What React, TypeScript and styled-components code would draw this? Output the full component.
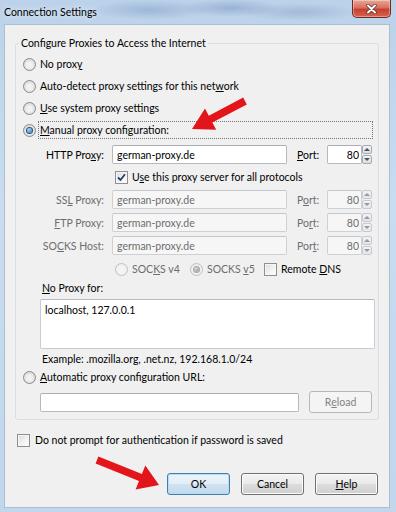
import React from 'react';
import styled, { createGlobalStyle, css } from 'styled-components';

const GlobalStyle = createGlobalStyle`
  html, body { margin: 0; padding: 0; }
  body {
    width: 396px; height: 512px; overflow: hidden;
    font-family: Lato, "Noto Sans", sans-serif;
    font-size: 10.5px; color: #000;
  }
  * { box-sizing: border-box; }
`;

const Window = styled.div`
  position: relative;
  width: 396px;
  height: 512px;
  display: flex;
  flex-direction: column;
  background:
    radial-gradient(ellipse 60px 10px at 150px 10px, rgba(120,150,190,0.45), transparent),
    radial-gradient(ellipse 50px 9px at 230px 8px, rgba(110,140,185,0.45), transparent),
    radial-gradient(ellipse 60px 9px at 300px 12px, rgba(120,150,190,0.4), transparent),
    linear-gradient(180deg, #bcd2ea 0%, #c9dcf0 40%, #c2d6ec 100%);
`;

const TitleBar = styled.div`
  height: 24px;
  display: flex;
  align-items: flex-start;
  flex-shrink: 0;
`;

const Title = styled.div`
  padding-left: 4px;
  line-height: 24px;
  color: #000;
  text-shadow: 0 0 6px rgba(255,255,255,0.9);
`;

const CloseButton = styled.div`
  margin-left: auto;
  margin-right: 5px;
  width: 39px;
  height: 18px;
  border: 1px solid #6d2b24;
  border-top: none;
  border-radius: 0 0 5px 5px;
  background: linear-gradient(180deg, #e9a796 0%, #d9705f 45%, #c8402f 55%, #d4644f 100%);
  display: flex;
  align-items: center;
  justify-content: center;
  box-shadow: inset 0 0 0 1px rgba(255,255,255,0.35);
`;

const Client = styled.div`
  flex: 1;
  margin: 0 6px 4px 4px;
  border: 1px solid #a9bfd6;
  background: #f0f0f0;
  display: flex;
  flex-direction: column;
`;

const Group = styled.fieldset`
  margin: 11px 10px 0 10px;
  padding: 3px 0 6px 0;
  border: 1px solid #d5dfe5;
  border-radius: 3px;
  min-width: 0;
  display: flex;
  flex-direction: column;
`;

const Legend = styled.legend`
  margin-left: 3px;
  padding: 0 2px;
  line-height: 14px;
`;

const RadioRow = styled.div`
  height: 22px;
  display: flex;
  align-items: center;
  padding-left: 7px;
`;

const OptionLabel = styled.span<{ $focused?: boolean; $disabled?: boolean }>`
  margin-left: 2px;
  padding: 0 1px;
  line-height: 16px;
  border: 1px dotted transparent;
  color: ${p => (p.$disabled ? '#6d6d6d' : '#000')};
  white-space: nowrap;
  ${p =>
    p.$focused &&
    css`
      flex: 1;
      margin-right: 5px;
      border-color: #777;
    `}
`;

const U = styled.span`
  text-decoration: underline;
  text-underline-offset: 1px;
`;

const Radio = styled.span<{ $checked?: boolean; $disabled?: boolean }>`
  width: 13px;
  height: 13px;
  flex-shrink: 0;
  border-radius: 50%;
  border: 1px solid ${p => (p.$disabled ? '#c0c0c0' : '#8b8b8b')};
  background: ${p =>
    p.$disabled
      ? 'radial-gradient(circle at 50% 55%, #f4f4f4 40%, #e6e6e6 100%)'
      : 'radial-gradient(circle at 50% 55%, #f2f2f2 30%, #cfcfcf 90%)'};
  display: flex;
  align-items: center;
  justify-content: center;
  &::after {
    content: '';
    width: 5px;
    height: 5px;
    border-radius: 50%;
    display: ${p => (p.$checked ? 'block' : 'none')};
    background: ${p =>
      p.$disabled
        ? 'radial-gradient(circle at 40% 35%, #d8d8d8, #8e8e8e)'
        : 'radial-gradient(circle at 40% 35%, #a8e0ff, #1b5ea6)'};
    box-shadow: 0 0 0 1px ${p => (p.$disabled ? '#a8a8a8' : '#2b4f7c')};
  }
`;

const CheckBoxBox = styled.span`
  width: 13px;
  height: 13px;
  flex-shrink: 0;
  border: 1px solid #8e8f8f;
  background: linear-gradient(135deg, #dcdcdc 0%, #f4f4f4 60%, #ffffff 100%);
  box-shadow: inset 0 0 0 1px #f6f6f6;
  display: flex;
  align-items: center;
  justify-content: center;
`;

const CheckBox: React.FC<{ checked?: boolean }> = ({ checked }) => (
  <CheckBoxBox>
    {checked && (
      <svg width="9" height="9" viewBox="0 0 9 9">
        <path d="M1 4.5 L3.5 7 L8 1.2" fill="none" stroke="#1e3f73" strokeWidth="1.8" />
      </svg>
    )}
  </CheckBoxBox>
);

const ProxyGrid = styled.div`
  margin-top: 4px;
  display: grid;
  grid-template-columns: 96px 185px 30px 45px;
  row-gap: 4px;
  align-items: center;
`;

const FieldLabel = styled.span<{ $disabled?: boolean }>`
  text-align: right;
  padding-right: 8px;
  color: ${p => (p.$disabled ? '#6d6d6d' : '#000')};
  white-space: nowrap;
`;

const PortLabel = styled.span<{ $disabled?: boolean }>`
  color: ${p => (p.$disabled ? '#6d6d6d' : '#000')};
`;

const boxStyle = css<{ $disabled?: boolean }>`
  height: 19px;
  margin: 0;
  font: inherit;
  border: 1px solid ${p => (p.$disabled ? '#cdd1d5' : '#b5b9bf')};
  border-top-color: ${p => (p.$disabled ? '#c4c8cc' : '#abadb3')};
  border-radius: 2px;
  background: ${p => (p.$disabled ? '#f6f6f6' : '#fff')};
  color: ${p => (p.$disabled ? '#6d6d6d' : '#000')};
  outline: none;
`;

const TextBox = styled.input<{ $w: number; $disabled?: boolean; $right?: boolean }>`
  ${boxStyle}
  width: ${p => p.$w}px;
  padding: 0 ${p => (p.$right ? '2px' : '4px')};
  text-align: ${p => (p.$right ? 'right' : 'left')};
`;

const EmptyField = styled.div<{ $w: number; $disabled?: boolean }>`
  ${boxStyle}
  width: ${p => p.$w}px;
`;

const PortBox = styled.div`
  display: flex;
  align-items: center;
`;

const Spinner = styled.div<{ $disabled?: boolean }>`
  width: 10px;
  height: 19px;
  display: flex;
  flex-direction: column;
  gap: 1px;
  opacity: ${p => (p.$disabled ? 0.55 : 1)};
`;

const SpinHalf = styled.div<{ $down?: boolean }>`
  flex: 1;
  border: 1px solid #a7abb0;
  border-radius: 2px;
  background: linear-gradient(180deg, #f4f4f4, #dedede);
  display: flex;
  align-items: center;
  justify-content: center;
  &::after {
    content: '';
    border-left: 3px solid transparent;
    border-right: 3px solid transparent;
    ${p =>
      p.$down
        ? css`border-top: 3px solid #44546a;`
        : css`border-bottom: 3px solid #44546a;`}
  }
`;

const SpanRow = styled.div<{ $h: number }>`
  grid-column: 2 / 5;
  height: ${p => p.$h}px;
  display: flex;
  align-items: center;
  padding-left: 3px;
`;

const SocksOption = styled.div<{ $w?: number }>`
  display: flex;
  align-items: center;
  gap: 4px;
  width: ${p => (p.$w ? `${p.$w}px` : 'auto')};
  white-space: nowrap;
`;

const Gray = styled.span`
  color: #6d6d6d;
`;

const SectionText = styled.div<{ $mt: number }>`
  margin: ${p => p.$mt}px 0 0 26px;
  line-height: 14px;
`;

const NoProxyArea = styled.div`
  margin: 4px 0 0 24px;
  width: 335px;
  height: 50px;
  padding: 3px 4px;
  background: #fff;
  border: 1px solid #c9ccd1;
  border-top-color: #b5b8bd;
  border-radius: 2px;
  line-height: 14px;
`;

const UrlRow = styled.div`
  margin: 3px 0 0 24px;
  display: flex;
  align-items: center;
  gap: 10px;
`;

const Button = styled.div<{ $default?: boolean; $disabled?: boolean }>`
  width: 63px;
  height: 22px;
  border-radius: 3px;
  display: flex;
  align-items: center;
  justify-content: center;
  border: 1px solid ${p => (p.$default ? '#3c7fb1' : p.$disabled ? '#b5b8bb' : '#707070')};
  color: ${p => (p.$disabled ? '#838383' : '#000')};
  background: ${p =>
    p.$disabled
      ? '#f4f4f4'
      : p.$default
      ? 'linear-gradient(180deg, #ecf4fa 0%, #e3eef8 48%, #cfe2f2 52%, #c3d9ec 100%)'
      : 'linear-gradient(180deg, #f2f2f2 0%, #ebebeb 48%, #dddddd 52%, #cfcfcf 100%)'};
  box-shadow: inset 0 0 0 1px ${p => (p.$default ? '#b9dcf3' : p.$disabled ? '#f4f4f4' : '#fcfcfc')};
`;

const AuthRow = styled.div`
  margin: 11px 0 0 12px;
  height: 18px;
  display: flex;
  align-items: center;
  gap: 5px;
`;

const ButtonRow = styled.div`
  margin-top: 24px;
  padding-right: 11px;
  display: flex;
  justify-content: flex-end;
  gap: 11px;
`;

const Overlay = styled.svg`
  position: absolute;
  left: 0;
  top: 0;
  pointer-events: none;
`;

function arrowPoints(tx: number, ty: number, px: number, py: number, w: number, L: number, H: number) {
  const dx = px - tx;
  const dy = py - ty;
  const len = Math.hypot(dx, dy);
  const ux = dx / len;
  const uy = dy / len;
  const nx = -uy;
  const ny = ux;
  const bx = px - ux * L;
  const by = py - uy * L;
  const pts: [number, number][] = [
    [tx + nx * w, ty + ny * w],
    [bx + nx * w, by + ny * w],
    [bx + nx * H, by + ny * H],
    [px, py],
    [bx - nx * H, by - ny * H],
    [bx - nx * w, by - ny * w],
    [tx - nx * w, ty - ny * w],
  ];
  return pts.map(p => p.map(v => v.toFixed(1)).join(',')).join(' ');
}

const ProxyRow: React.FC<{ label: React.ReactNode; port: React.ReactNode; disabled?: boolean }> = ({
  label,
  port,
  disabled,
}) => (
  <>
    <FieldLabel $disabled={disabled}>{label}</FieldLabel>
    <TextBox $w={175} $disabled={disabled} readOnly value="german-proxy.de" />
    <PortLabel $disabled={disabled}>{port}</PortLabel>
    <PortBox>
      <TextBox $w={35} $right $disabled={disabled} readOnly value="80" />
      <Spinner $disabled={disabled}>
        <SpinHalf />
        <SpinHalf $down />
      </Spinner>
    </PortBox>
  </>
);

export default function App() {
  return (
    <>
      <GlobalStyle />
      <Window>
        <TitleBar>
          <Title>Connection Settings</Title>
          <CloseButton>
            <svg width="11" height="10" viewBox="0 0 11 10">
              <path d="M2 1.5 L9 8.5 M9 1.5 L2 8.5" stroke="#4a2a28" strokeWidth="3.2" strokeLinecap="round" />
              <path d="M2 1.5 L9 8.5 M9 1.5 L2 8.5" stroke="#fff" strokeWidth="2" strokeLinecap="round" />
            </svg>
          </CloseButton>
        </TitleBar>
        <Client>
          <Group>
            <Legend>Configure Proxies to Access the Internet</Legend>
            <RadioRow>
              <Radio />
              <OptionLabel>
                No prox<U>y</U>
              </OptionLabel>
            </RadioRow>
            <RadioRow>
              <Radio />
              <OptionLabel>
                Auto-detect proxy settings for this net<U>w</U>ork
              </OptionLabel>
            </RadioRow>
            <RadioRow>
              <Radio />
              <OptionLabel>
                <U>U</U>se system proxy settings
              </OptionLabel>
            </RadioRow>
            <RadioRow>
              <Radio $checked />
              <OptionLabel $focused>
                <U>M</U>anual proxy configuration:
              </OptionLabel>
            </RadioRow>
            <ProxyGrid>
              <ProxyRow
                label={
                  <>
                    HTTP Pro<U>x</U>y:
                  </>
                }
                port={
                  <>
                    <U>P</U>ort:
                  </>
                }
              />
              <SpanRow $h={18}>
                <SocksOption>
                  <CheckBox checked />
                  <span>
                    U<U>s</U>e this proxy server for all protocols
                  </span>
                </SocksOption>
              </SpanRow>
              <ProxyRow
                disabled
                label={
                  <>
                    SS<U>L</U> Proxy:
                  </>
                }
                port={
                  <>
                    P<U>o</U>rt:
                  </>
                }
              />
              <ProxyRow
                disabled
                label={
                  <>
                    <U>F</U>TP Proxy:
                  </>
                }
                port={
                  <>
                    Po<U>r</U>t:
                  </>
                }
              />
              <ProxyRow
                disabled
                label={
                  <>
                    SO<U>C</U>KS Host:
                  </>
                }
                port={
                  <>
                    Por<U>t</U>:
                  </>
                }
              />
              <SpanRow $h={20}>
                <SocksOption $w={75}>
                  <Radio $disabled />
                  <Gray>
                    SOC<U>K</U>S v4
                  </Gray>
                </SocksOption>
                <SocksOption $w={74}>
                  <Radio $disabled $checked />
                  <Gray>
                    SOCKS <U>v</U>5
                  </Gray>
                </SocksOption>
                <SocksOption>
                  <CheckBox />
                  <span>
                    Remote <U>D</U>NS
                  </span>
                </SocksOption>
              </SpanRow>
            </ProxyGrid>
            <SectionText $mt={2}>
              <U>N</U>o Proxy for:
            </SectionText>
            <NoProxyArea>localhost, 127.0.0.1</NoProxyArea>
            <SectionText $mt={3}>Example: .mozilla.org, .net.nz, 192.168.1.0/24</SectionText>
            <RadioRow>
              <Radio />
              <OptionLabel>
                <U>A</U>utomatic proxy configuration URL:
              </OptionLabel>
            </RadioRow>
            <UrlRow>
              <EmptyField $w={259} />
              <Button $disabled>
                R<U>e</U>load
              </Button>
            </UrlRow>
          </Group>
          <AuthRow>
            <CheckBox />
            <span>
              Do not prompt for authent<U>i</U>cation if password is saved
            </span>
          </AuthRow>
          <ButtonRow>
            <Button $default>OK</Button>
            <Button>Cancel</Button>
            <Button>
              <U>H</U>elp
            </Button>
          </ButtonRow>
        </Client>
        <Overlay width="396" height="512" viewBox="0 0 396 512">
          <polygon points={arrowPoints(245, 101, 192, 129, 3.8, 21, 12)} fill="#e3151a" />
          <polygon points={arrowPoints(97, 460, 159, 485, 3.8, 20, 13)} fill="#e3151a" />
        </Overlay>
      </Window>
    </>
  );
}
